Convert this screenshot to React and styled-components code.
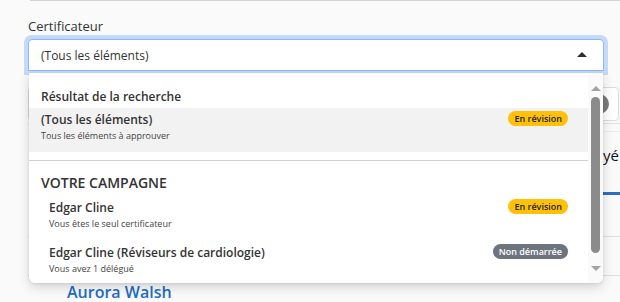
import styled, { createGlobalStyle } from "styled-components";

const GlobalStyle = createGlobalStyle`
  html, body {
    margin: 0;
    padding: 0;
    background: #fafafa;
    overflow: hidden;
  }
  body {
    font-family: "Open Sans", "Noto Sans", sans-serif;
    color: #333;
  }
`;

const Page = styled.div`
  width: 592px;
  padding-left: 28px;
`;

const TopEdge = styled.div`
  height: 1px;
  margin-left: 2px;
  background: #d3d3d3;
`;

const Field = styled.div`
  position: relative;
  margin-top: 15px;
  z-index: 2;
`;

const Label = styled.div`
  font-size: 13px;
  line-height: 20px;
  margin-bottom: 3px;
`;

const Select = styled.div`
  display: flex;
  align-items: center;
  justify-content: space-between;
  height: 32px;
  padding: 0 16px 0 12px;
  box-sizing: border-box;
  width: 576px;
  background: #fff;
  border: 1px solid #8fb8f2;
  border-radius: 4px 4px 0 0;
  box-shadow: 0 0 0 4px #c3dafa;
  font-size: 12px;
`;

const Caret = styled.span`
  width: 0;
  height: 0;
  border-left: 5px solid transparent;
  border-right: 5px solid transparent;
  border-bottom: 5px solid #2b2f33;
  margin-top: -1px;
`;

const Menu = styled.div`
  position: absolute;
  top: 100%;
  left: 1px;
  width: 574px;
  margin-top: 2px;
  height: 210px;
  display: flex;
  background: #fff;
  border-radius: 0 0 6px 6px;
  box-shadow: 0 4px 12px rgba(0, 0, 0, 0.16), 0 1px 3px rgba(0, 0, 0, 0.08);
  overflow: hidden;
`;

const List = styled.div`
  flex: 1;
  padding-top: 12px;
`;

const GroupTitle = styled.div`
  padding-left: 12px;
  font-size: ${(p) => (p.$big ? "14px" : "12px")};
  font-weight: 600;
  line-height: ${(p) => (p.$big ? "22px" : "23px")};
  text-transform: ${(p) => (p.$big ? "uppercase" : "none")};
  color: #333;
`;

const Option = styled.div`
  display: flex;
  justify-content: space-between;
  align-items: flex-start;
  padding: ${(p) => (p.$first ? "3px 20px 6px 12px" : "5px 20px 7px 20px")};
  background: ${(p) => (p.$active ? "#f2f2f2" : "transparent")};
  height: ${(p) => (p.$first ? "35px" : "33px")};
`;

const OptionText = styled.div`
  display: flex;
  flex-direction: column;
`;

const OptionTitle = styled.div`
  font-size: 12px;
  font-weight: 600;
  line-height: 18px;
`;

const OptionSub = styled.div`
  font-size: 9px;
  line-height: 14px;
  color: #444;
`;

const Badge = styled.span`
  padding: 0 6px;
  height: 15px;
  line-height: 15px;
  border-radius: 8px;
  font-size: 9px;
  font-weight: 600;
  background: ${(p) => (p.$tone === "muted" ? "#6c757d" : "#ffc107")};
  color: ${(p) => (p.$tone === "muted" ? "#fff" : "#212529")};
`;

const Divider = styled.div`
  height: 1px;
  margin: 8px 0 11px;
  background: #cfcfcf;
`;

const Scrollbar = styled.div`
  width: 15px;
  display: flex;
  flex-direction: column;
  align-items: center;
  background: #fafafa;
  padding-top: 13px;
`;

const Arrow = styled.span`
  width: 0;
  height: 0;
  border-left: 5px solid transparent;
  border-right: 5px solid transparent;
  border-${(p) => (p.$down ? "top" : "bottom")}: 5px solid #a3a3a3;
`;

const Thumb = styled.div`
  width: 9px;
  height: 156px;
  margin: 6px 0 13px;
  border-radius: 5px;
  background: #8b8b8b;
`;

const Toolbar = styled.div`
  display: flex;
  justify-content: flex-end;
  align-items: center;
  margin-top: 16px;
  height: 34px;
  width: 591px;
  box-sizing: border-box;
  border: 1px solid #dcdcdc;
  border-radius: 4px;
  background: #fff;
`;

const Toggle = styled.span`
  width: 24px;
  height: 20px;
  margin-right: 9px;
  border-radius: 10px;
  background: #7a7a7a;
`;

const Rule = styled.div`
  height: 1px;
  margin-top: ${(p) => p.$gap}px;
  background: ${(p) => p.$color || "#e2e2e2"};
`;

const HeaderRow = styled.div`
  display: flex;
  justify-content: flex-end;
  height: 46px;
  padding-top: 12px;
  box-sizing: border-box;
`;

const HeaderCell = styled.span`
  font-size: 15px;
  color: #111;
  line-height: 22px;
  margin-right: 1px;
`;

const Progress = styled.div`
  height: 3px;
  margin: 14px 0 0 3px;
  background: #2e6fbd;
`;

const Row = styled.div`
  height: ${(p) => p.$h}px;
  border-bottom: 1px solid #dedede;
  box-sizing: border-box;
`;

const PersonRow = styled.div`
  padding: 5px 0 0 39px;
`;

const Person = styled.a`
  font-size: 16px;
  font-weight: 600;
  color: #1f6cc4;
  line-height: 22px;
`;

export default function App() {
  return (
    <>
      <GlobalStyle />
      <Page>
        <TopEdge />
        <Field>
          <Label>Certificateur</Label>
          <Select>
            <span>(Tous les éléments)</span>
            <Caret />
          </Select>
          <Menu>
            <List>
              <GroupTitle>Résultat de la recherche</GroupTitle>
              <Option $active $first>
                <OptionText>
                  <OptionTitle>(Tous les éléments)</OptionTitle>
                  <OptionSub>Tous les éléments à approuver</OptionSub>
                </OptionText>
                <Badge>En révision</Badge>
              </Option>
              <Divider />
              <GroupTitle $big>Votre campagne</GroupTitle>
              <Option>
                <OptionText>
                  <OptionTitle>Edgar Cline</OptionTitle>
                  <OptionSub>Vous êtes le seul certificateur</OptionSub>
                </OptionText>
                <Badge>En révision</Badge>
              </Option>
              <Option>
                <OptionText>
                  <OptionTitle>Edgar Cline (Réviseurs de cardiologie)</OptionTitle>
                  <OptionSub>Vous avez 1 délégué</OptionSub>
                </OptionText>
                <Badge $tone="muted">Non démarrée</Badge>
              </Option>
            </List>
            <Scrollbar>
              <Arrow />
              <Thumb />
              <Arrow $down />
            </Scrollbar>
          </Menu>
        </Field>
        <Toolbar>
          <Toggle />
        </Toolbar>
        <Rule $gap={2} />
        <Rule $gap={7} $color="#ececec" />
        <HeaderRow>
          <HeaderCell>Envoyé</HeaderCell>
        </HeaderRow>
        <Progress />
        <Row $h={42} />
        <Row $h={39} />
        <PersonRow>
          <Person>Aurora Walsh</Person>
        </PersonRow>
      </Page>
    </>
  );
}
